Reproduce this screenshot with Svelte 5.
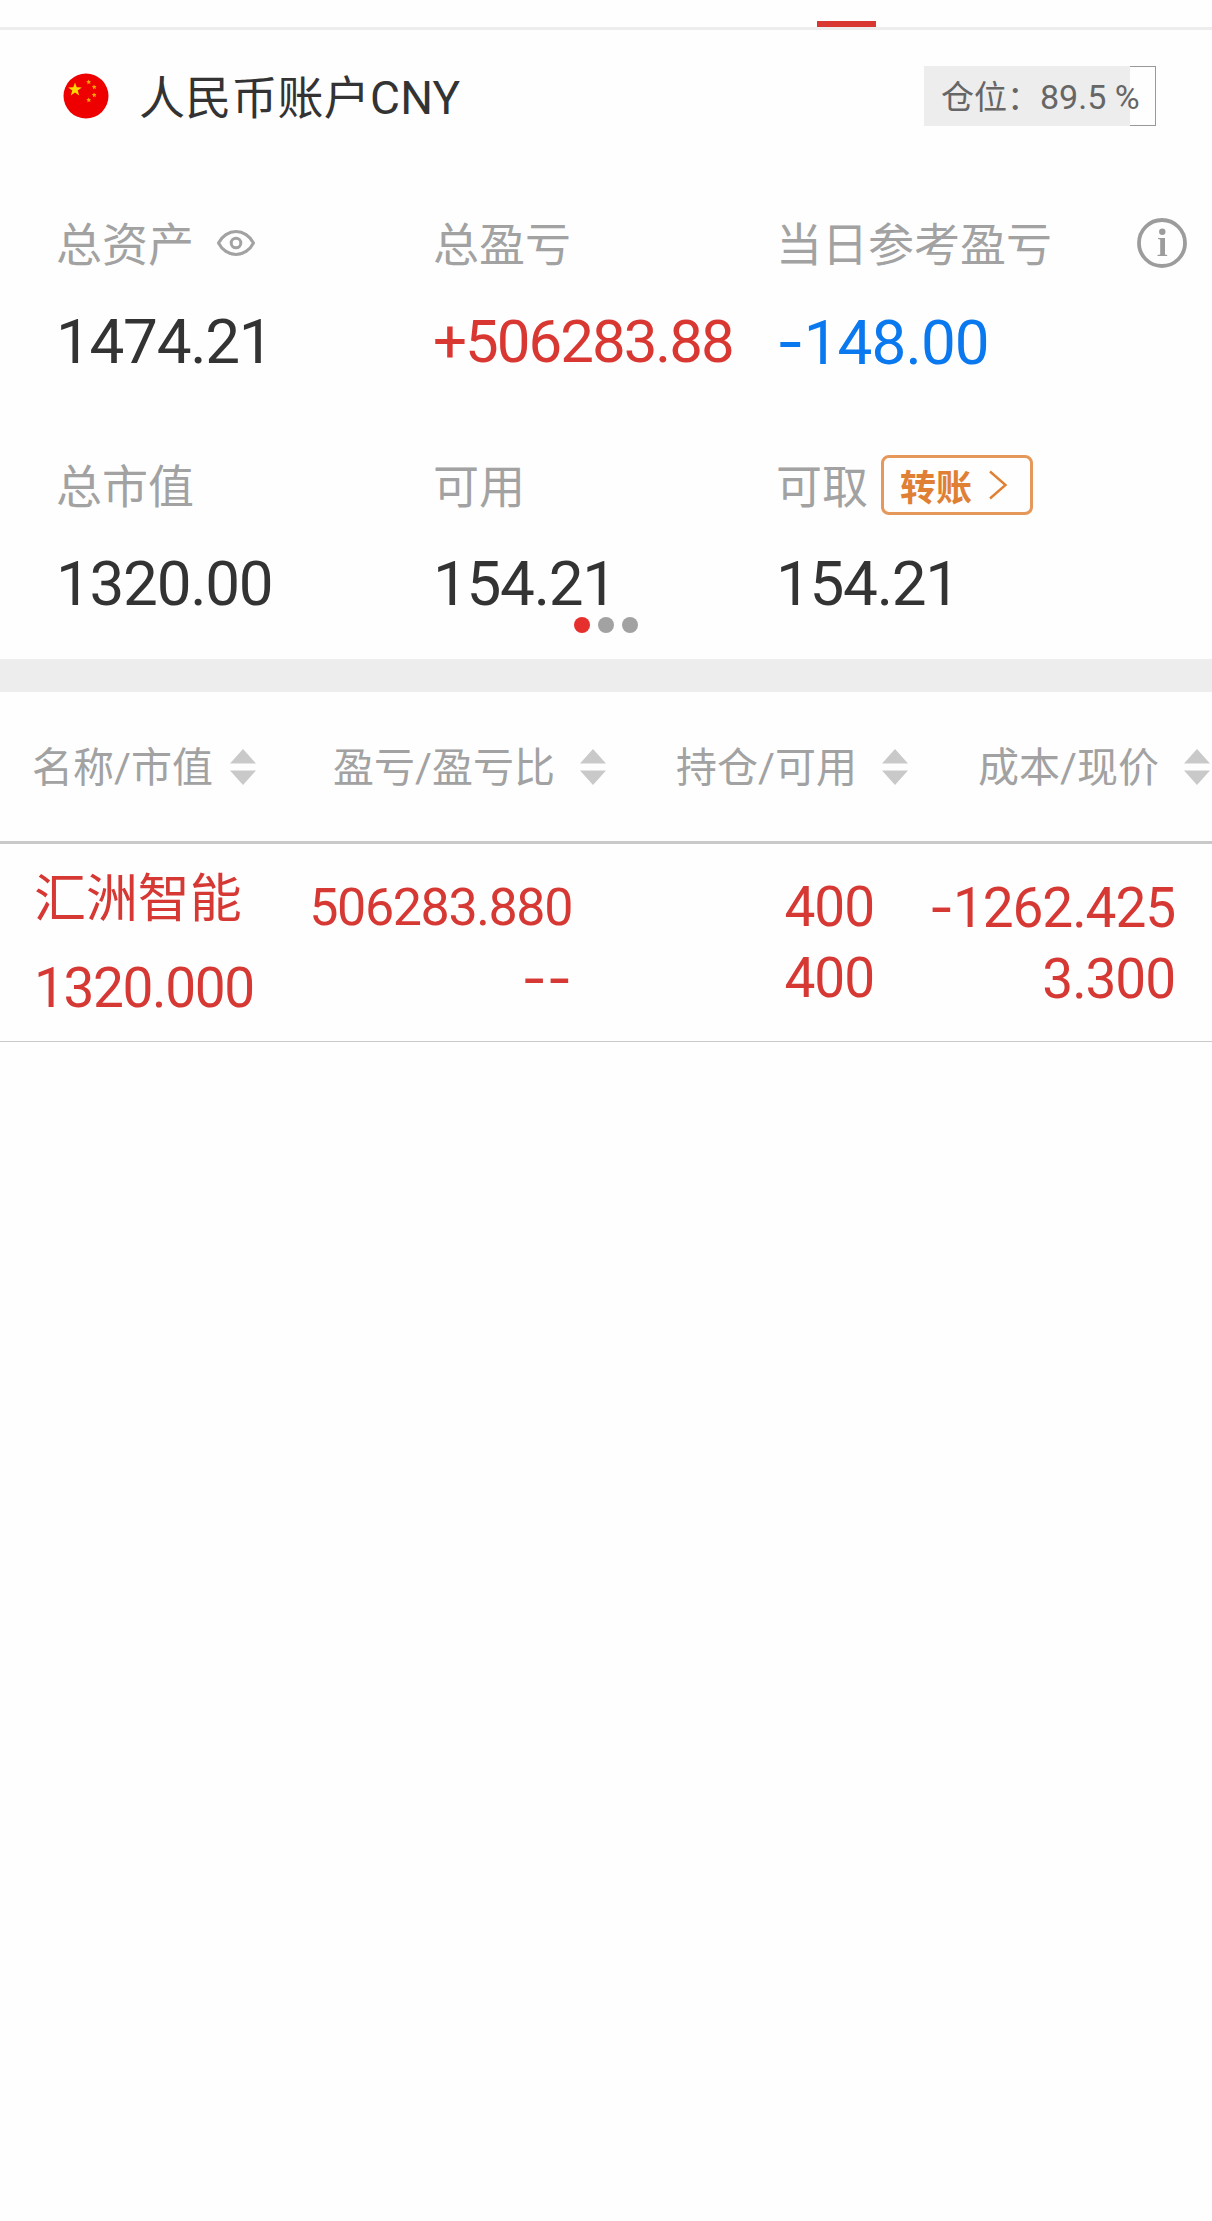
<script lang="ts">
	/**
	 * Brokerage account overview: asset summary card and list of holdings.
	 */

	interface Metric {
		label: string;
		value: string;
		tone?: "up" | "down";
		extra?: "eye" | "info" | "transfer";
	}

	interface Holding {
		name: string;
		marketValue: string;
		profit: string;
		profitRatio: string;
		position: string;
		available: string;
		cost: string;
		price: string;
	}

	const metrics: Metric[] = [
		{ label: "总资产", value: "1474.21", extra: "eye" },
		{ label: "总盈亏", value: "+506283.88", tone: "up" },
		{ label: "当日参考盈亏", value: "-148.00", tone: "down", extra: "info" },
		{ label: "总市值", value: "1320.00" },
		{ label: "可用", value: "154.21" },
		{ label: "可取", value: "154.21", extra: "transfer" },
	];

	const columns = ["名称/市值", "盈亏/盈亏比", "持仓/可用", "成本/现价"];

	const holdings: Holding[] = [
		{
			name: "汇洲智能",
			marketValue: "1320.000",
			profit: "506283.880",
			profitRatio: "--",
			position: "400",
			available: "400",
			cost: "-1262.425",
			price: "3.300",
		},
	];

	const positionRatio = 89.5;
	const pageCount = 3;
	let activePage = $state(0);
</script>

{#snippet amount(text: string)}
	{#each text.split(/(-)/).filter(Boolean) as part}{#if part === "-"}<span class="minus">-</span>{:else}{part}{/if}{/each}
{/snippet}

<div class="page">
	<div class="tabs"><span class="tab-indicator"></span></div>

	<section class="summary">
		<header class="account">
			<svg class="flag" viewBox="0 0 46 46" aria-hidden="true">
				<circle cx="23" cy="23" r="22.5" fill="#ee0000" />
				<path
					fill="#ffd800"
					d="M12 9.500l1.700 4.800 5.100.1-4.100 3.100 1.500 4.900-4.200-2.900-4.200 2.900 1.500-4.900-4.100-3.100 5.100-.1z"
				/>
				<g fill="#f9a800">
					<path id="star" d="M25.500 6.500l.8 1.500 1.600-.1-1 1.300.7 1.700-1.700-.6-1.400 1.100.1-1.800-1.400-1 1.700-.5z" />
					<use href="#star" x="5.500" y="5" />
					<use href="#star" x="5.500" y="13" />
					<use href="#star" x="0" y="18" />
				</g>
			</svg>
			<h1>人民币账户CNY</h1>
			<div class="ratio">
				<span class="ratio-fill" style={`width: ${positionRatio}%`}></span>
				<span class="ratio-text">仓位：<span class="ratio-number">{positionRatio} %</span></span>
			</div>
		</header>

		<div class="metrics">
			{#each metrics as metric}
				<div class="metric">
					<div class="label">
						<span class="label-text">{metric.label}</span>
						{#if metric.extra === "eye"}
							<svg class="eye" viewBox="0 0 38 26" aria-hidden="true">
								<path d="M1.500 13C5 6 12 1.500 19 1.500S33 6 36.500 13C33 20 26 24.500 19 24.500S5 20 1.500 13z" />
								<circle cx="19" cy="13" r="4.800" />
							</svg>
						{:else if metric.extra === "info"}
							<svg class="info" viewBox="0 0 50 50" aria-hidden="true">
								<circle cx="25" cy="25" r="23" fill="none" stroke="#9c9c9c" stroke-width="3.800" />
								<circle cx="25.300" cy="13.800" r="3.200" />
								<path d="M21 20h7v16.500l2.200.6V38H20.500v-.9l2.700-.6V21.500L21 20.900z" />
							</svg>
						{:else if metric.extra === "transfer"}
							<button class="transfer">
								转账
								<svg viewBox="0 0 20 30" aria-hidden="true"><path d="M2 1.500l15.500 13.500L2 28.500" /></svg>
							</button>
						{/if}
					</div>
					<div class="value {metric.tone ?? ''}">{@render amount(metric.value)}</div>
				</div>
			{/each}
		</div>

		<div class="pager">
			{#each { length: pageCount } as _, i}
				<button
					class="dot"
					class:active={i === activePage}
					aria-label={`${i + 1}`}
					onclick={() => (activePage = i)}
				></button>
			{/each}
		</div>
	</section>

	<div class="table-head">
		{#each columns as column}
			<div class="th">
				<span>{column}</span>
				<svg class="sort" viewBox="0 0 26 36" aria-hidden="true">
					<path d="M13 0l13 14.500H0zM13 36L0 21.500h26z" />
				</svg>
			</div>
		{/each}
	</div>

	{#each holdings as row}
		<div class="row">
			<div class="cell name">
				<span class="stock">{row.name}</span>
				<span class="market">{row.marketValue}</span>
			</div>
			<div class="cell profit">
				<span>{row.profit}</span>
				<span class="profit-ratio">{@render amount(row.profitRatio)}</span>
			</div>
			<div class="cell">
				<span>{row.position}</span>
				<span>{row.available}</span>
			</div>
			<div class="cell">
				<span>{@render amount(row.cost)}</span>
				<span>{row.price}</span>
			</div>
		</div>
	{/each}
</div>

<style>
	:global(body) {
		margin: 0;
		background: #fefefe;
	}

	.page {
		width: 1212px;
		min-height: 2221px;
		overflow: hidden;
		background: #fefefe;
		color: #333;
		font-family: Roboto, "Noto Sans CJK SC", sans-serif;
	}

	.tabs {
		display: flex;
		align-items: flex-end;
		height: 27px;
		padding-left: 817px;
		border-bottom: 3px solid #ededed;
	}

	.tab-indicator {
		width: 59px;
		height: 6px;
		background: #d93732;
	}

	.summary {
		display: flex;
		flex-direction: column;
		height: 629px;
		border-bottom: 33px solid #ededed;
	}

	.account {
		display: flex;
		align-items: center;
		height: 60px;
		padding: 36px 56px 0 63px;
	}

	.flag {
		width: 46px;
		height: 46px;
	}

	h1 {
		margin: 3px 0 0 30px;
		font-size: 46px;
		font-weight: 400;
		line-height: 60px;
		letter-spacing: 0.2px;
	}

	.ratio {
		position: relative;
		box-sizing: border-box;
		width: 232px;
		height: 60px;
		margin-left: auto;
		border: 1px solid #999;
	}

	.ratio-fill {
		position: absolute;
		top: -1px;
		bottom: -1px;
		left: -1px;
		background: #ededed;
	}

	.ratio-text {
		position: relative;
		display: block;
		padding-left: 16px;
		color: #666;
		font-size: 33px;
		line-height: 60px;
		white-space: nowrap;
	}

	.ratio-number {
		font-size: 34px;
	}

	.metrics {
		display: grid;
		grid-template-columns: 377px 343px 1fr;
		grid-auto-rows: 242px;
		height: 484px;
		padding: 87px 25px 0 56px;
	}

	.label {
		display: flex;
		align-items: center;
		height: 60px;
		color: #a2a2a2;
		font-size: 46px;
		line-height: 60px;
	}

	.label-text {
		padding-top: 3px;
	}

	.eye {
		width: 38px;
		height: 26px;
		margin-left: 23px;
		fill: none;
		stroke: #a2a2a2;
		stroke-width: 3;
	}

	.info {
		width: 50px;
		height: 50px;
		margin-left: auto;
		fill: #9c9c9c;
	}

	.transfer {
		display: flex;
		align-items: center;
		box-sizing: border-box;
		width: 152px;
		height: 60px;
		margin-left: 13px;
		padding: 0 0 1px 16px;
		border: 3px solid #e6975a;
		border-radius: 8px;
		background: none;
		color: #e08035;
		font: 700 36px/54px "Noto Sans CJK SC", sans-serif;
	}

	.transfer svg {
		width: 20px;
		height: 30px;
		margin-left: 16px;
		fill: none;
		stroke: #e08035;
		stroke-width: 2.4;
	}

	.value {
		margin-top: 33px;
		font-size: 62px;
		line-height: 72px;
		letter-spacing: -1.3px;
		white-space: nowrap;
	}

	.up {
		font-size: 60px;
		letter-spacing: -2px;
		color: #d93732;
	}

	.down {
		letter-spacing: -0.9px;
		color: #0a78ee;
	}

	.minus {
		font-family: Inter, sans-serif;
	}

	.pager {
		display: flex;
		justify-content: center;
		gap: 8px;
		margin-top: -80px;
	}

	.dot {
		width: 16px;
		height: 16px;
		padding: 0;
		border: 0;
		border-radius: 50%;
		background: #a2a2a2;
	}

	.dot.active {
		background: #e6302e;
	}

	.table-head {
		display: grid;
		grid-template-columns: 222px 350px 302px 302px;
		height: 149px;
		padding-left: 34px;
		border-bottom: 3px solid #c9c9c9;
	}

	.th {
		display: flex;
		align-items: center;
		justify-content: flex-end;
		color: #a2a2a2;
		font-size: 41px;
		white-space: nowrap;
	}

	.th span {
		padding-bottom: 5px;
	}

	.sort {
		flex-shrink: 0;
		width: 26px;
		height: 36px;
		margin-left: 25px;
		fill: #c9c9c9;
	}

	.th:first-child .sort {
		margin-left: 17px;
	}

	.row {
		display: grid;
		grid-template-columns: 281px 257px 302px 301px;
		height: 197px;
		padding-left: 34px;
		border-bottom: 1px solid #c9c9c9;
		color: #d63834;
	}

	.cell {
		display: flex;
		flex-direction: column;
		align-items: flex-end;
		padding-top: 28px;
		font-size: 55px;
		line-height: 71px;
		letter-spacing: -1.1px;
	}

	.name {
		align-items: flex-start;
		padding-top: 18px;
	}

	.stock {
		font-size: 52px;
		line-height: 76px;
		letter-spacing: -0.1px;
	}

	.market {
		line-height: 100px;
		letter-spacing: -1.4px;
	}

	.profit {
		font-size: 52px;
		letter-spacing: -1.4px;
	}

	.profit-ratio {
		font-size: 55px;
		letter-spacing: 0;
	}
</style>
